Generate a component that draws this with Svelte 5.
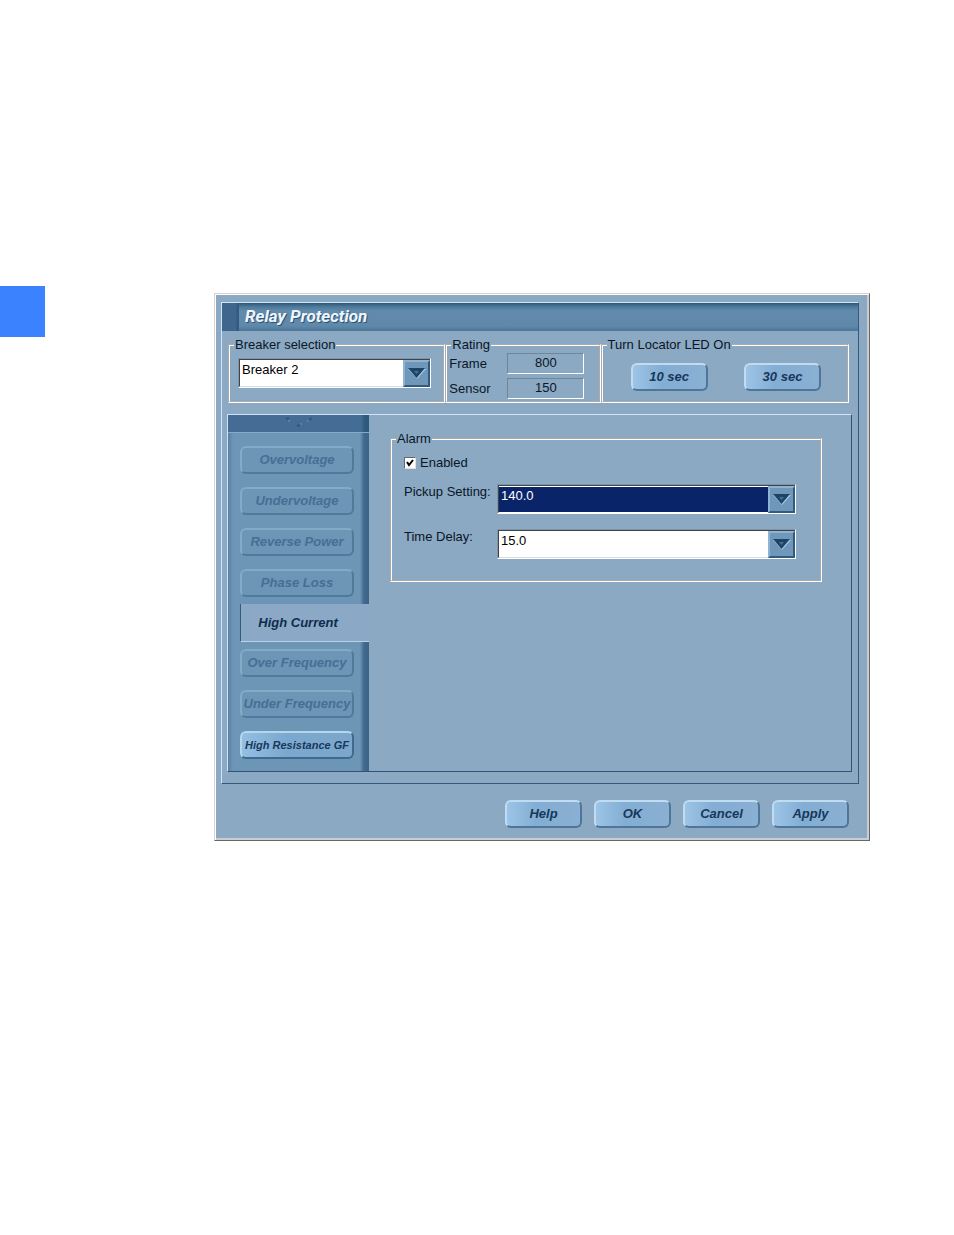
<script>
  const tabs = [
    { name: 'Overvoltage', state: 'disabled' },
    { name: 'Undervoltage', state: 'disabled' },
    { name: 'Reverse Power', state: 'disabled' },
    { name: 'Phase Loss', state: 'disabled' },
    { name: 'High Current', state: 'active' },
    { name: 'Over Frequency', state: 'disabled' },
    { name: 'Under Frequency', state: 'disabled' },
    { name: 'High Resistance GF', state: 'ready' }
  ];

  const actions = ['Help', 'OK', 'Cancel', 'Apply'];

  let enabled = $state(true);
</script>

{#snippet arrow()}
  <span class="arrow">
    <svg width="18" height="11" viewBox="0 0 18 11" aria-hidden="true">
      <path d="M0 1H18L9 11Z" fill="#a9c8e2" />
      <path d="M0 0H17L8.5 10Z" fill="#1d4467" />
      <path d="M6 3H11L8.5 6Z" fill="#47728f" />
    </svg>
  </span>
{/snippet}

<div class="page">
  <div class="marker"></div>

  <main class="dialog">
    <div class="frame">
      <header class="title-bar">
        <h1>Relay Protection</h1>
      </header>

      <!-- Breaker, rating and locator groups -->
      <div class="groups">
        <fieldset class="breaker">
          <legend>Breaker selection</legend>
          <div class="combo">
            <select aria-label="Breaker selection">
              <option>Breaker 2</option>
            </select>
            {@render arrow()}
          </div>
        </fieldset>
        <fieldset class="rating">
          <legend>Rating</legend>
          <label for="frame">Frame</label>
          <input id="frame" value="800" readonly />
          <label for="sensor">Sensor</label>
          <input id="sensor" value="150" readonly />
        </fieldset>
        <fieldset class="locator">
          <legend>Turn Locator LED On</legend>
          <button class="btn">10 sec</button>
          <button class="btn">30 sec</button>
        </fieldset>
      </div>

      <div class="panel">
        <nav class="sidebar">
          <div class="scroll-edge">
            <svg width="28" height="10" viewBox="0 0 28 10" aria-hidden="true">
              <path d="M1 2l3-1M24 3l3-2M12 9l3-1" stroke="#2f587d" stroke-width="2" />
              <path d="M3 4h2M22 4h2M15 7h2" stroke="#6d94b5" stroke-width="1" />
            </svg>
          </div>
          <div class="tabs">
            {#each tabs as tab}
              <button class="tab {tab.state}" class:long={tab.name.length > 16} disabled={tab.state === 'disabled'}>{tab.name}</button>
            {/each}
          </div>
        </nav>

        <section class="content">
          <fieldset class="alarm">
            <legend>Alarm</legend>
            <label class="check">
              <input type="checkbox" bind:checked={enabled} />
              Enabled
            </label>
            <div class="row">
              <label for="pickup">Pickup Setting:</label>
              <div class="combo">
                <select id="pickup" class="selected">
                  <option>140.0</option>
                </select>
                {@render arrow()}
              </div>
            </div>
            <div class="row">
              <label for="delay">Time Delay:</label>
              <div class="combo">
                <select id="delay">
                  <option>15.0</option>
                </select>
                {@render arrow()}
              </div>
            </div>
          </fieldset>
        </section>
      </div>
    </div>

    <footer class="actions">
      {#each actions as action}
        <button class="btn">{action}</button>
      {/each}
    </footer>
  </main>
</div>

<style>
  :global(body) {
    margin: 0;
    background: #fff;
  }

  .page, .page * {
    box-sizing: border-box;
  }

  .page {
    display: flex;
    align-items: flex-start;
    padding: 286px 84px 48px 0;
    font: 13px/16px "Liberation Sans", Arial, sans-serif;
    color: #0a1626;
  }

  .marker {
    flex: none;
    width: 45px;
    height: 51px;
    margin-right: 169px;
    background: #3b82ff;
  }

  .dialog {
    flex: 1;
    min-width: 0;
    margin-top: 7px;
    padding: 8px 8px 12px 5px;
    background: #8ba9c3;
    border: 1px solid #d8d2cf;
    border-right-color: #666;
    border-bottom-color: #666;
    box-shadow: inset 1px 1px #fff, inset -2px -2px #c9cdd2;
  }

  .frame {
    margin: 0 2px 0 1px;
    border: 1px solid #33597c;
    border-top-color: #cfe5f7;
    border-left-color: #cfe5f7;
  }

  .title-bar {
    height: 28px;
    padding-left: 23px;
    background:
      linear-gradient(90deg, #3f678d 14px, #315b80 15px, #315b80 17px, transparent 17px),
      linear-gradient(#2c5777, #4f7b9d 4px, #628aab 8px, #5f88a9 23px, #4c7799);
  }

  .title-bar h1 {
    margin: 0;
    font: italic bold 17px/27px "Liberation Sans Narrow", "Roboto", sans-serif;
    color: #eef6fc;
    text-shadow: 1px 1px #2f5472;
  }

  fieldset {
    min-width: 0;
    margin: 0;
    border: 2px groove #fff;
  }

  legend {
    padding: 0 1px;
  }

  .groups {
    display: grid;
    grid-template-columns: 7fr 5fr 8fr;
    padding: 6px 9px 0 6px;
  }

  .groups fieldset {
    height: 66px;
  }

  .breaker {
    padding: 5px 12px 0 8px;
  }

  .breaker legend {
    margin-left: -4px;
  }

  .rating {
    display: grid;
    grid-template-columns: 58px 77px;
    grid-auto-rows: 21px;
    row-gap: 4px;
    padding: 0 0 0 2px;
  }

  .rating legend {
    margin-left: 2px;
  }

  .rating input {
    width: 100%;
    height: 21px;
    padding: 0 0 3px;
    background: none;
    border: 1px solid #fff;
    border-top-color: #6f8598;
    border-left-color: #6f8598;
    border-radius: 0;
    font: inherit;
    color: inherit;
    text-align: center;
  }

  .rating label {
    align-self: center;
  }

  .locator {
    display: flex;
    justify-content: space-between;
    padding: 10px 26px 0 28px;
  }

  .locator legend {
    margin-left: -24px;
  }

  .btn {
    width: 77px;
    height: 28px;
    padding: 0;
    background: linear-gradient(90deg, #9cc4e6, #83add3 40%, #8ab0d2);
    border: 2px solid #bfdcf2;
    border-right-color: #4e7698;
    border-bottom-color: #4e7698;
    border-radius: 6px;
    font: italic bold 13px/16px "Liberation Sans", Arial, sans-serif;
    color: #17385a;
  }

  .combo {
    position: relative;
    flex: 1;
    height: 30px;
    border: 1px solid #fff;
    border-top-color: #8293a3;
    border-left-color: #8293a3;
  }

  .combo select {
    display: block;
    width: 100%;
    height: 28px;
    padding: 2px 28px 8px 2px;
    appearance: none;
    background: #fff;
    border: 1px solid #3c444c;
    border-right: 0;
    border-bottom-color: #d8dde2;
    border-radius: 0;
    font: 13px/16px "Liberation Sans", Arial, sans-serif;
    color: #000;
  }

  .combo .selected {
    background: #0a246a;
    border-bottom-color: #fff;
    box-shadow: inset 0 1px #fff;
    color: #fff;
  }

  .arrow {
    position: absolute;
    top: 1px;
    right: 0;
    bottom: 0;
    display: grid;
    place-items: center;
    width: 27px;
    background: #6f97b9;
    border: 2px solid #8fb3d1;
    border-right-color: #315b7e;
    border-bottom-color: #315b7e;
    pointer-events: none;
  }

  .panel {
    display: flex;
    margin: 11px 6px 11px 5px;
    border: 1px solid #2f5579;
    border-top-color: #cfe5f7;
    border-left-color: #cfe5f7;
  }

  .sidebar {
    flex: none;
    width: 141px;
    background: linear-gradient(90deg, #5680a3, #6d95b6 5px, #6d95b6 132px, #41698d 136px, #3d6487);
  }

  .scroll-edge {
    display: flex;
    justify-content: center;
    height: 18px;
    padding-top: 2px;
    background: linear-gradient(90deg, #446c94 133px, #2f587d 137px);
    border-bottom: 1px solid #85a9c7;
  }

  .tabs {
    display: flex;
    flex-direction: column;
    gap: 13px;
    padding: 13px 15px 12px 12px;
  }

  .tab {
    height: 28px;
    padding: 0;
    background: #6d95b6;
    border: 2px solid #85aac8;
    border-right-color: #50799c;
    border-bottom-color: #50799c;
    border-radius: 6px;
    font: italic bold 13px/16px "Liberation Sans", Arial, sans-serif;
    color: #476e94;
    white-space: nowrap;
  }

  .tab.active {
    height: 38px;
    margin: -6px -15px -6px 0;
    padding-right: 14px;
    background: #8ba9c6;
    border: 0;
    border-left: 1px solid #33597c;
    border-bottom: 1px solid #b5d3ea;
    border-radius: 0;
    color: #102c4c;
  }

  .tab.ready {
    background: linear-gradient(90deg, #94bfe3, #7ca8cf 40%, #7ca6cb);
    border-color: #b4d5ee #41698d #41698d #b4d5ee;
    color: #17385a;
  }

  .tab.long {
    font-size: 11px;
  }

  .content {
    flex: 1;
    min-width: 0;
    padding: 16px 29px 0 21px;
  }

  .alarm {
    padding: 8px 24px 21px 12px;
  }

  .alarm legend {
    margin-left: -8px;
  }

  .check {
    display: flex;
    align-items: center;
    gap: 4px;
    margin-bottom: 13px;
  }

  .check input {
    width: 12px;
    height: 12px;
    margin: 0;
    appearance: none;
    background: #fff;
    border: 1px solid #5f6a75;
    border-right-color: #e4e2dc;
    border-bottom-color: #e4e2dc;
  }

  .check input:checked {
    background: #fff url("data:image/svg+xml,%3Csvg xmlns='http://www.w3.org/2000/svg' viewBox='0 0 10 10'%3E%3Cpath d='M2 4L4 7L8 2' fill='none' stroke='black' stroke-width='2'/%3E%3C/svg%3E") center / 10px 10px;
  }

  .row {
    display: flex;
  }

  .row + .row {
    margin-top: 15px;
  }

  .row label {
    width: 93px;
  }

  .actions {
    display: flex;
    justify-content: flex-end;
    gap: 12px;
    padding: 16px 12px 0 0;
  }
</style>
